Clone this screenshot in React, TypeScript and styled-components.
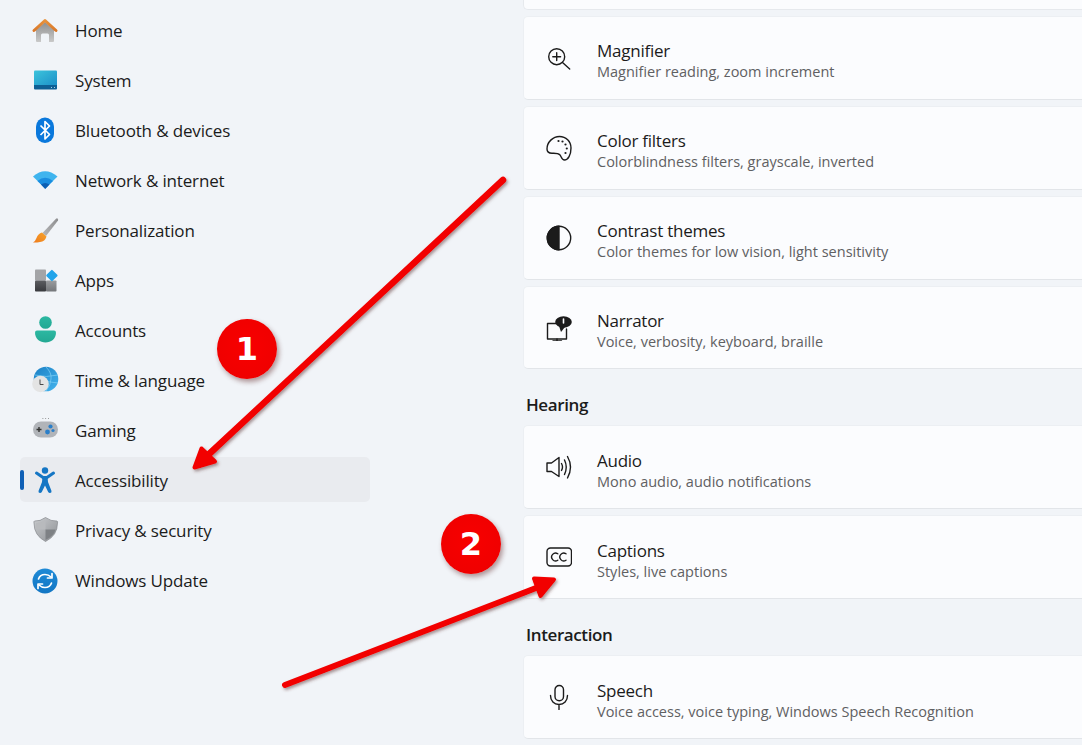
import * as React from 'react'
import styled, { createGlobalStyle } from 'styled-components'

const GlobalStyle = createGlobalStyle`
  html, body {
    margin: 0;
    padding: 0;
    background: #f1f4f8;
  }
  * {
    box-sizing: border-box;
  }
`

const Page = styled.div`
  position: relative;
  display: flex;
  width: 1082px;
  height: 745px;
  overflow: hidden;
  background: #f1f4f8;
  font-family: 'Open Sans', 'Noto Sans', sans-serif;
  color: #1b1b1b;
`

const Sidebar = styled.nav`
  display: flex;
  flex-direction: column;
  gap: 5px;
  flex: 0 0 523px;
  padding: 7px 153px 0 20px;
`

const NavItem = styled.div<{ $active?: boolean }>`
  position: relative;
  display: flex;
  align-items: center;
  gap: 15px;
  height: 45px;
  padding: 1px 0 0 10px;
  border-radius: 5px;
  background: ${(p) => (p.$active ? '#e9ebef' : 'transparent')};
  font-size: 17px;
  letter-spacing: -0.15px;
`

const ActiveMark = styled.span`
  position: absolute;
  left: 0;
  top: 13px;
  width: 4px;
  height: 20px;
  border-radius: 2px;
  background: #0f5fb5;
`

const NavIcon = styled.svg`
  flex: 0 0 30px;
  width: 30px;
  height: 30px;
  margin-top: -1px;
`

const Content = styled.main`
  display: flex;
  flex-direction: column;
  flex: 1;
  min-width: 0;
`

const CardStub = styled.div`
  height: 11px;
  margin-top: -1px;
  margin-bottom: 6px;
  background: #fbfcfe;
  border: 1px solid #e6e9ed;
  border-right: none;
  border-radius: 0 0 0 5px;
`

const Card = styled.section`
  display: flex;
  align-items: center;
  gap: 25px;
  height: 84px;
  margin-bottom: 6px;
  padding-left: 22px;
  background: #fbfcfe;
  border: 1px solid #eceff3;
  border-bottom-color: #e2e5e9;
  border-right: none;
  border-radius: 5px 0 0 5px;
`

const CardIcon = styled.svg`
  flex: 0 0 26px;
  width: 26px;
  height: 26px;
  fill: none;
  stroke: #1b1b1b;
  stroke-width: 1.4;
  stroke-linecap: round;
  stroke-linejoin: round;
`

const CardText = styled.div`
  display: flex;
  flex-direction: column;
  padding-top: 7px;
`

const CardTitle = styled.div`
  font-size: 17px;
  line-height: 21px;
  letter-spacing: -0.25px;
`

const CardSub = styled.div`
  font-size: 14.5px;
  line-height: 21px;
  color: #5f6062;
`

const SectionHead = styled.h2`
  margin: 0;
  height: 50px;
  padding: 18px 0 0 3px;
  font-size: 17px;
  line-height: 24px;
  font-weight: 600;
  letter-spacing: -0.4px;
`

const Overlay = styled.svg`
  position: absolute;
  left: 0;
  top: 0;
  width: 1082px;
  height: 745px;
  pointer-events: none;
`

const Badge = styled.div<{ $x: number; $y: number }>`
  position: absolute;
  left: ${(p) => p.$x - 30}px;
  top: ${(p) => p.$y - 30}px;
  display: flex;
  align-items: center;
  justify-content: center;
  width: 60px;
  height: 60px;
  border-radius: 50%;
  background: radial-gradient(circle at 50% 45%, #f80000 0%, #f00000 70%, #dc0000 100%);
  box-shadow: 2px 3px 5px rgba(90, 30, 30, 0.45);
  color: #fff;
  font-family: 'DejaVu Sans', sans-serif;
  font-weight: 700;
  font-size: 32px;
`

const Gradients = () => (
  <svg width="0" height="0" style={{ position: 'absolute' }}>
    <defs>
      <linearGradient id="roof" x1="0" y1="0" x2="0" y2="1">
        <stop offset="0" stopColor="#e8913a" />
        <stop offset="1" stopColor="#d9782a" />
      </linearGradient>
      <linearGradient id="wall" x1="0" y1="0" x2="0" y2="1">
        <stop offset="0" stopColor="#8f8f8f" />
        <stop offset="1" stopColor="#c9c9c9" />
      </linearGradient>
      <linearGradient id="screen" x1="0" y1="0" x2="1" y2="1">
        <stop offset="0" stopColor="#3cc4dc" />
        <stop offset="1" stopColor="#1c8fc8" />
      </linearGradient>
      <linearGradient id="handle" x1="1" y1="0" x2="0" y2="1">
        <stop offset="0" stopColor="#8d8d8f" />
        <stop offset="1" stopColor="#b7b7b9" />
      </linearGradient>
      <linearGradient id="bristle" x1="1" y1="0" x2="0" y2="1">
        <stop offset="0" stopColor="#f7a42c" />
        <stop offset="1" stopColor="#ee7a1c" />
      </linearGradient>
      <linearGradient id="person" x1="0" y1="0" x2="0" y2="1">
        <stop offset="0" stopColor="#2cb8a2" />
        <stop offset="1" stopColor="#23a893" />
      </linearGradient>
      <linearGradient id="globe" x1="0" y1="0" x2="1" y2="1">
        <stop offset="0" stopColor="#1b7fc4" />
        <stop offset="1" stopColor="#45b5ee" />
      </linearGradient>
      <linearGradient id="shield" x1="0" y1="0" x2="1" y2="1">
        <stop offset="0" stopColor="#c9cbce" />
        <stop offset="1" stopColor="#8e9195" />
      </linearGradient>
      <linearGradient id="sync" x1="0" y1="0" x2="0" y2="1">
        <stop offset="0" stopColor="#1f8ad6" />
        <stop offset="1" stopColor="#1276c4" />
      </linearGradient>
      <linearGradient id="tileDark" x1="0" y1="0" x2="0" y2="1">
        <stop offset="0" stopColor="#5c5d61" />
        <stop offset="1" stopColor="#38393d" />
      </linearGradient>
      <linearGradient id="tileMid" x1="0" y1="0" x2="0" y2="1">
        <stop offset="0" stopColor="#9a9c9f" />
        <stop offset="1" stopColor="#74767a" />
      </linearGradient>
    </defs>
  </svg>
)

const navIcons: Record<string, React.ReactNode> = {
  home: (
    <>
      <path d="M6 15 L15 7 L24 15 V26 Q24 27 23 27 H19 V20 Q19 18.5 17.5 18.5 H12.5 Q11 18.5 11 20 V27 H7 Q6 27 6 26 Z" fill="url(#wall)" />
      <path d="M4 15.5 L15 5.5 L26 15.5" fill="none" stroke="url(#roof)" strokeWidth="3" strokeLinecap="round" strokeLinejoin="round" />
    </>
  ),
  system: (
    <>
      <path d="M4 6.5 Q4 5.5 5 5.5 H26 Q27 5.5 27 6.5 V21 H4 Z" fill="url(#screen)" />
      <path d="M4 20 H27 V23.5 Q27 24.5 26 24.5 H5 Q4 24.5 4 23.5 Z" fill="#0e5f94" />
      <path d="M21 22.5 H22 M24 22.5 H25" stroke="#cfe8f5" strokeWidth="0.8" />
    </>
  ),
  bluetooth: (
    <>
      <rect x="6" y="2.5" width="18" height="25.5" rx="9" fill="#0a78dc" />
      <path d="M10.5 10.5 L19.5 19.5 L15 24 V6.5 L19.5 11 L10.5 20" fill="none" stroke="#fff" strokeWidth="1.7" strokeLinejoin="round" />
    </>
  ),
  network: (
    <>
      <path d="M3 11.5 Q15 1 27.5 11.5 L15.2 23.5 Z" fill="#3fb4ee" />
      <path d="M7.5 16 Q15 9.5 23 16 L15.2 23.5 Z" fill="#1a8de0" />
      <path d="M11 19.5 Q15 16.5 19.5 19.5 L15.2 24 Z" fill="#0d5fb3" />
    </>
  ),
  brush: (
    <>
      <path d="M27.5 3.5 Q28.5 4.5 28 5.5 L16 21 L12.5 18 L26 3.7 Q27 3 27.5 3.5 Z" fill="url(#handle)" />
      <path d="M12 17.5 L16.5 21.5 Q15 26.5 10 27 Q6 27.8 3 27.5 Q5.5 26 6.5 23 Q8 18.5 12 17.5 Z" fill="url(#bristle)" />
    </>
  ),
  apps: (
    <>
      <rect x="5" y="4.5" width="11" height="11" rx="0.8" fill="#a3a4a7" />
      <rect x="5" y="15.5" width="11" height="11" rx="0.8" fill="url(#tileDark)" />
      <rect x="16" y="15.5" width="10.5" height="11" rx="0.8" fill="url(#tileMid)" />
      <rect x="17.6" y="6.2" width="8.6" height="8.6" rx="1" transform="rotate(45 21.9 10.5)" fill="#22a4ea" />
    </>
  ),
  accounts: (
    <>
      <circle cx="15.5" cy="7.5" r="6.3" fill="url(#person)" />
      <path d="M5 17.5 Q5 15.5 7 15.5 H24 Q26 15.5 26 17.5 C26 24 21 27.5 15.5 27.5 C10 27.5 5 24 5 17.5 Z" fill="url(#person)" />
    </>
  ),
  time: (
    <>
      <circle cx="16" cy="14" r="12.3" fill="url(#globe)" />
      <path d="M16 2 Q22 8 21 14 Q21 20 16 26 M5 10 Q16 13 28 10 M6 18 Q16 15 28 18" fill="none" stroke="#7fd0f5" strokeWidth="0.7" />
      <circle cx="10.5" cy="19" r="8.3" fill="#e4e4e4" />
      <path d="M10 14.5 V19.5 H13.5" fill="none" stroke="#4a4a4a" strokeWidth="1" />
    </>
  ),
  gaming: (
    <>
      <rect x="3" y="6.5" width="25" height="16" rx="8" fill="#b1b4b9" />
      <path d="M6.5 14.5 H11.5 M9 12 V17" stroke="#333" strokeWidth="1.4" />
      <circle cx="20.5" cy="11.5" r="2.1" fill="#2b7fc9" />
      <circle cx="17.5" cy="17" r="2.4" fill="#2b7fc9" />
      <circle cx="23" cy="15.5" r="1.6" fill="#2b7fc9" />
      <path d="M12.5 3.5 H13.3 M15.3 3.5 H16.1 M18 3.5 H18.8" stroke="#777" strokeWidth="0.9" />
    </>
  ),
  accessibility: (
    <>
      <circle cx="15" cy="5.5" r="3.2" fill="#1576c4" />
      <path d="M6.5 8 L13 12.5 H17 L23.5 8" fill="none" stroke="#1576c4" strokeWidth="3" strokeLinecap="round" strokeLinejoin="round" />
      <path d="M12.5 11.5 H17.5 L18 17 L21.5 26 Q21.8 28 20 28 Q18.8 28 18.2 27 L15 20.5 L11.8 27 Q11.2 28 10 28 Q8.2 28 8.5 26 L12 17 Z" fill="#1576c4" />
    </>
  ),
  privacy: (
    <>
      <path d="M15.5 2.5 Q21 6.5 27 6 Q28 6.5 27.5 8 Q27.5 20.5 15.5 26.5 Q4 20.5 4 8 Q3.5 6.5 4.5 6 Q10 6.5 15.5 2.5 Z" fill="url(#shield)" stroke="#85888c" strokeWidth="0.7" />
      <path d="M15.5 5 V14.5 H5.5 Q6 10 6 8 Q11 8 15.5 5 Z" fill="#b8babd" />
      <path d="M15.5 14.5 H25.5 Q24 21 15.5 25 Z" fill="#7e8185" />
    </>
  ),
  update: (
    <>
      <circle cx="15" cy="16" r="12.5" fill="url(#sync)" />
      <path d="M8.5 14 Q10 9.5 15 9.5 Q18.5 9.5 21 12 M21.5 18 Q20 22.5 15 22.5 Q11.5 22.5 9 20" fill="none" stroke="#fff" strokeWidth="1.7" strokeLinecap="round" />
      <path d="M22 8.5 V13 H17.5 M8 23.5 V19 H12.5" fill="none" stroke="#fff" strokeWidth="1.7" strokeLinecap="round" strokeLinejoin="round" />
    </>
  ),
}

const cardIcons: Record<string, React.ReactNode> = {
  magnifier: (
    <>
      <circle cx="10.7" cy="11.7" r="8" />
      <path d="M16.5 17.5 L23.7 24 M10.7 7.8 V15.6 M6.8 11.7 H14.6" />
    </>
  ),
  palette: (
    <>
      <path d="M13.5 1.5 C20 1.5 25 6.5 25 13 C25 20 22 25 18.5 25 C15.5 25 15.5 21.5 13.8 19.7 C12 18 9 18.3 6 18.3 C3 18.3 1 16.5 1 14 C1 7 7 1.5 13.5 1.5 Z" />
      <g fill="#1b1b1b" stroke="none">
        <circle cx="12.5" cy="6" r="1.1" />
        <circle cx="16.5" cy="6.5" r="1.1" />
        <circle cx="19.5" cy="9.5" r="1.1" />
        <circle cx="20.8" cy="13.5" r="1.1" />
        <circle cx="19.5" cy="18" r="1.1" />
      </g>
    </>
  ),
  contrast: (
    <>
      <circle cx="13" cy="13" r="11.7" />
      <path d="M13 1.3 A11.7 11.7 0 0 0 13 24.7 Z" fill="#1b1b1b" />
    </>
  ),
  narrator: (
    <>
      <path d="M11 8.5 H1.5 V24 H20.5 V14" />
      <path d="M7 26 H15.5 M11 24 V26" />
      <ellipse cx="17.5" cy="7" rx="8.3" ry="5.8" fill="#1b1b1b" stroke="none" />
      <path d="M13 11 L15 17 L19 12 Z" fill="#1b1b1b" stroke="none" />
      <path d="M17.5 4 V8" stroke="#fbfcfe" strokeWidth="1.6" />
    </>
  ),
  audio: (
    <>
      <path d="M1 9 H5.5 L13 3.5 V22.5 L5.5 17.5 H1 Z" />
      <path d="M15.5 9.5 Q17.5 13 15.5 16.5 M18.5 6 Q22 13 18.5 20.5 M21.5 2.5 Q27.5 13 21.5 24" />
    </>
  ),
  captions: (
    <>
      <rect x="1" y="4" width="24.5" height="18" rx="3.5" />
      <path d="M11.8 9.8 A3.9 3.9 0 1 0 11.8 16.2 M20 9.8 A3.9 3.9 0 1 0 20 16.2" />
    </>
  ),
  speech: (
    <>
      <rect x="9" y="1.5" width="8.5" height="15.3" rx="4.2" />
      <path d="M4.5 11.5 C4.5 17 8 20.5 13 20.5 C18 20.5 21.5 17 21.5 11.5 M13 20.5 V25.5" />
    </>
  ),
}

const NAV_ITEMS = [
  { icon: 'home', label: 'Home' },
  { icon: 'system', label: 'System' },
  { icon: 'bluetooth', label: 'Bluetooth & devices' },
  { icon: 'network', label: 'Network & internet' },
  { icon: 'brush', label: 'Personalization' },
  { icon: 'apps', label: 'Apps' },
  { icon: 'accounts', label: 'Accounts' },
  { icon: 'time', label: 'Time & language' },
  { icon: 'gaming', label: 'Gaming' },
  { icon: 'accessibility', label: 'Accessibility', active: true },
  { icon: 'privacy', label: 'Privacy & security' },
  { icon: 'update', label: 'Windows Update' },
]

const SettingCard = ({ icon, title, sub }: { icon: string; title: string; sub: string }) => (
  <Card>
    <CardIcon viewBox="0 0 26 26">{cardIcons[icon]}</CardIcon>
    <CardText>
      <CardTitle>{title}</CardTitle>
      <CardSub>{sub}</CardSub>
    </CardText>
  </Card>
)

export default function App() {
  return (
    <>
      <GlobalStyle />
      <Gradients />
      <Page>
        <Sidebar>
          {NAV_ITEMS.map((item) => (
            <NavItem key={item.label} $active={item.active}>
              {item.active && <ActiveMark />}
              <NavIcon viewBox="0 0 30 30">{navIcons[item.icon]}</NavIcon>
              {item.label}
            </NavItem>
          ))}
        </Sidebar>
        <Content>
          <CardStub />
          <SettingCard icon="magnifier" title="Magnifier" sub="Magnifier reading, zoom increment" />
          <SettingCard icon="palette" title="Color filters" sub="Colorblindness filters, grayscale, inverted" />
          <SettingCard icon="contrast" title="Contrast themes" sub="Color themes for low vision, light sensitivity" />
          <SettingCard icon="narrator" title="Narrator" sub="Voice, verbosity, keyboard, braille" />
          <SectionHead>Hearing</SectionHead>
          <SettingCard icon="audio" title="Audio" sub="Mono audio, audio notifications" />
          <SettingCard icon="captions" title="Captions" sub="Styles, live captions" />
          <SectionHead>Interaction</SectionHead>
          <SettingCard icon="speech" title="Speech" sub="Voice access, voice typing, Windows Speech Recognition" />
        </Content>

        <Overlay viewBox="0 0 1082 745">
          <defs>
            <filter id="arrowShadow" x="-10%" y="-10%" width="120%" height="120%">
              <feDropShadow dx="1.5" dy="2" stdDeviation="1.5" floodColor="#5a3030" floodOpacity="0.5" />
            </filter>
          </defs>
          <g fill="#f20000" stroke="#f20000" strokeLinecap="round" strokeLinejoin="round" filter="url(#arrowShadow)">
            <path d="M503 180 L207 456" fill="none" strokeWidth="6.5" />
            <path d="M194.5 467.5 L201.5 448.5 L215 461.5 Z" strokeWidth="4" />
            <path d="M285 685 L536 588" fill="none" strokeWidth="6" />
            <path d="M554 579.5 L534 578.5 L540.5 596 Z" strokeWidth="4" />
          </g>
        </Overlay>
        <Badge $x={247} $y={349}>1</Badge>
        <Badge $x={471} $y={544}>2</Badge>
      </Page>
    </>
  )
}
